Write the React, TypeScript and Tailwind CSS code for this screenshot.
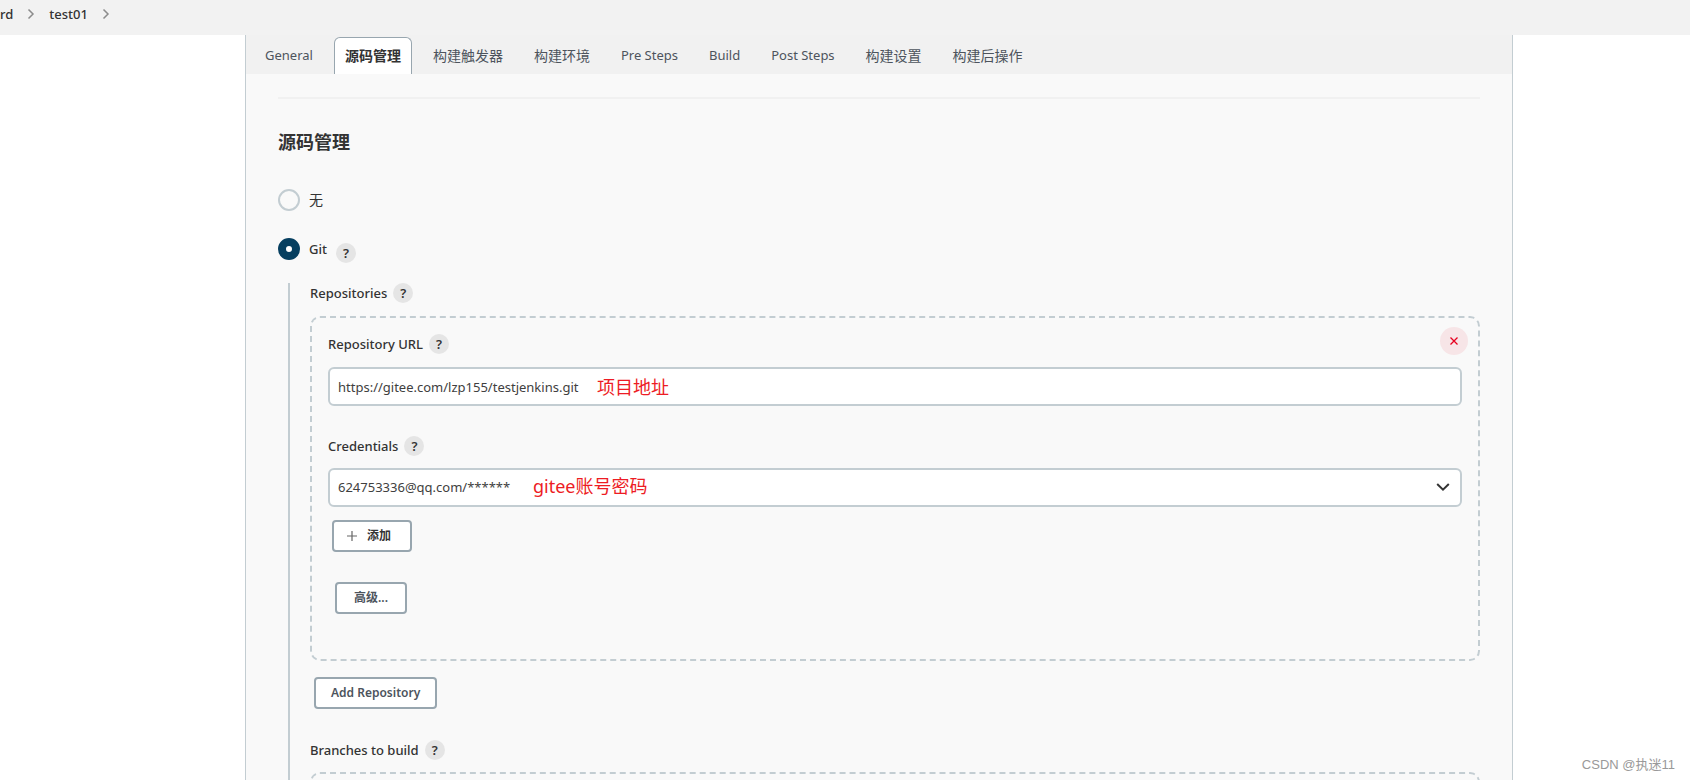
import { useState } from "react";
import type { ReactNode } from "react";

const tabs = [
  { id: "general", name: "General" },
  { id: "scm", name: "源码管理", active: true },
  { id: "triggers", name: "构建触发器", cjk: true },
  { id: "environment", name: "构建环境", cjk: true },
  { id: "pre-steps", name: "Pre Steps" },
  { id: "build", name: "Build" },
  { id: "post-steps", name: "Post Steps" },
  { id: "settings", name: "构建设置", cjk: true },
  { id: "post-build", name: "构建后操作", cjk: true },
];

function Crumb() {
  return (
    <svg viewBox="0 0 8 12" className="h-3 w-2" fill="none" stroke="#8c8c8c" strokeWidth="1.5" aria-hidden="true">
      <path d="M1.5 1.5 6 6 1.5 10.5" />
    </svg>
  );
}

function Help({ topic }: { topic: string }) {
  return (
    <button
      type="button"
      aria-label={`Help for feature: ${topic}`}
      className="flex h-5 w-5 shrink-0 items-center justify-center rounded-full bg-[#e5e5e5] text-[13px] font-semibold text-[#333]"
    >
      ?
    </button>
  );
}

function FieldLabel({ children, topic, htmlFor }: { children: ReactNode; topic: string; htmlFor?: string }) {
  return (
    <div className="flex h-5 items-center gap-1.5">
      <label htmlFor={htmlFor} className="text-[13px] font-medium leading-5">
        {children}
      </label>
      <Help topic={topic} />
    </div>
  );
}

function Button({ children, className = "" }: { children: ReactNode; className?: string }) {
  return (
    <button
      type="button"
      className={`flex h-8 items-center rounded-sm border-2 border-[#98a6af] bg-white px-[15px] text-xs font-semibold text-[#4d545d] ${className}`}
    >
      {children}
    </button>
  );
}

function Note({ children, className }: { children: ReactNode; className: string }) {
  return (
    <span className={`pointer-events-none absolute text-lg leading-6 text-[#ed1c24] ${className}`}>{children}</span>
  );
}

const radio =
  "h-[22px] w-[22px] shrink-0 appearance-none rounded-full border-2 border-[#c3cdd2] checked:border-8 checked:border-[#063f60] checked:bg-white";
const field =
  "h-[39px] w-full appearance-none rounded-md border-2 border-[#c3cdd2] bg-white px-2 text-[13px] text-[#404040]";

export default function App() {
  const [scm, setScm] = useState("git");
  const [url, setUrl] = useState("https://gitee.com/lzp155/testjenkins.git");

  return (
    <div className="relative flex h-screen flex-col overflow-hidden bg-white font-['Noto_Sans','Noto_Sans_CJK_SC',sans-serif] text-sm text-[#333]">
      <nav className="flex h-[35px] shrink-0 items-start bg-[#f2f2f2] pt-1 text-[13px] font-medium leading-5">
        <ol className="flex items-center gap-[14px]">
          <li className="flex items-center gap-[14px]">
            <a href="#dashboard">rd</a>
            <Crumb />
          </li>
          <li className="flex items-center gap-[14px]">
            <a href="#test01">test01</a>
            <Crumb />
          </li>
        </ol>
      </nav>

      <main className="mr-[177px] ml-[245px] flex-1 border-x border-[#c3cdd2] bg-[#f9f9f9]">
        <div className="flex h-[39px] items-end gap-[11px] bg-[#f1f1f1] pl-[9px]">
          {tabs.map((tab) => (
            <a
              key={tab.id}
              href={`#${tab.id}`}
              className={
                tab.active
                  ? "flex h-[37px] items-center whitespace-nowrap rounded-t-md border border-b-0 border-[#98a6af] bg-white px-[10px] font-semibold text-[#333]"
                  : tab.cjk
                    ? "flex h-[37px] items-center whitespace-nowrap px-[10px] text-[#4d545d]"
                    : "flex h-[37px] items-center whitespace-nowrap px-[10px] text-[13px] text-[#4d545d]"
              }
            >
              {tab.name}
            </a>
          ))}
        </div>

        <form className="px-8 pt-[23px]" onSubmit={(e) => e.preventDefault()}>
          <hr className="border-t-2 border-[#f1f1f1]" />
          <h2 className="mt-[31px] text-lg font-bold leading-6">源码管理</h2>

          <div className="mt-[35px] flex h-[22px] items-center gap-[9px]">
            <input
              id="scm-none"
              type="radio"
              name="scm"
              className={radio}
              checked={scm === "none"}
              onChange={() => setScm("none")}
            />
            <label htmlFor="scm-none">无</label>
          </div>

          <div className="mt-[27px] flex h-[22px] items-center gap-[9px]">
            <input
              id="scm-git"
              type="radio"
              name="scm"
              className={radio}
              checked={scm === "git"}
              onChange={() => setScm("git")}
            />
            <label htmlFor="scm-git" className="text-[13px] font-medium">
              Git
            </label>
            <div className="pt-2">
              <Help topic="Git" />
            </div>
          </div>

          <div className="mt-[23px] ml-[10px] border-l-2 border-[#c3cdd2] pl-5">
            <FieldLabel topic="Repositories">Repositories</FieldLabel>

            <section className="relative mt-[13px] rounded-[10px] border-2 border-dashed border-[#c3cdd2] px-4 pt-4 pb-[45px]">
              <button
                type="button"
                aria-label="Delete repository"
                className="absolute top-[9px] right-[10px] flex h-7 w-7 items-center justify-center rounded-full bg-[#f7e5e7] text-[#e6001f]"
              >
                <svg viewBox="0 0 8 8" className="h-2 w-2" fill="none" stroke="currentColor" strokeWidth="1.3" aria-hidden="true">
                  <path d="M.5.5l7 7M7.5.5l-7 7" />
                </svg>
              </button>

              <FieldLabel topic="Repository URL" htmlFor="repo-url">
                Repository URL
              </FieldLabel>
              <div className="relative mt-[13px]">
                <input id="repo-url" type="text" className={field} value={url} onChange={(e) => setUrl(e.target.value)} />
                <Note className="top-2 left-[269px]">项目地址</Note>
              </div>

              <div className="mt-[30px]">
                <FieldLabel topic="Credentials" htmlFor="credentials">
                  Credentials
                </FieldLabel>
              </div>
              <div className="relative mt-3">
                <select id="credentials" className={field}>
                  <option>624753336@qq.com/******</option>
                </select>
                <svg
                  viewBox="0 0 14 8"
                  className="pointer-events-none absolute top-[15px] right-3 h-2 w-[14px]"
                  fill="none"
                  stroke="#333"
                  strokeWidth="2"
                  aria-hidden="true"
                >
                  <path d="M1.2 1 7 6.6 12.8 1" />
                </svg>
                <Note className="top-1.5 left-[205px]">gitee账号密码</Note>
              </div>

              <Button className="mt-[13px] ml-1 w-20 gap-[10px] pl-[13px]! text-[#333]!">
                <svg viewBox="0 0 10 10" className="h-[10px] w-[10px]" fill="none" stroke="#666" strokeWidth="1.2" aria-hidden="true">
                  <path d="M5 0v10M0 5h10" />
                </svg>
                添加
              </Button>
              <Button className="mt-[30px] ml-[7px] w-[72px] justify-center">高级...</Button>
            </section>

            <Button className="mt-4 ml-1">Add Repository</Button>

            <div className="mt-[31px]">
              <FieldLabel topic="Branches to build">Branches to build</FieldLabel>
            </div>
            <section className="mt-3 h-24 rounded-[10px] border-2 border-dashed border-[#c3cdd2]" />
          </div>
        </form>
      </main>

      <p className="absolute right-[15px] bottom-[5px] font-['Liberation_Sans','Noto_Sans_CJK_SC',sans-serif] text-[13px] leading-5 text-[#999]">
        CSDN @执迷11
      </p>
    </div>
  );
}
